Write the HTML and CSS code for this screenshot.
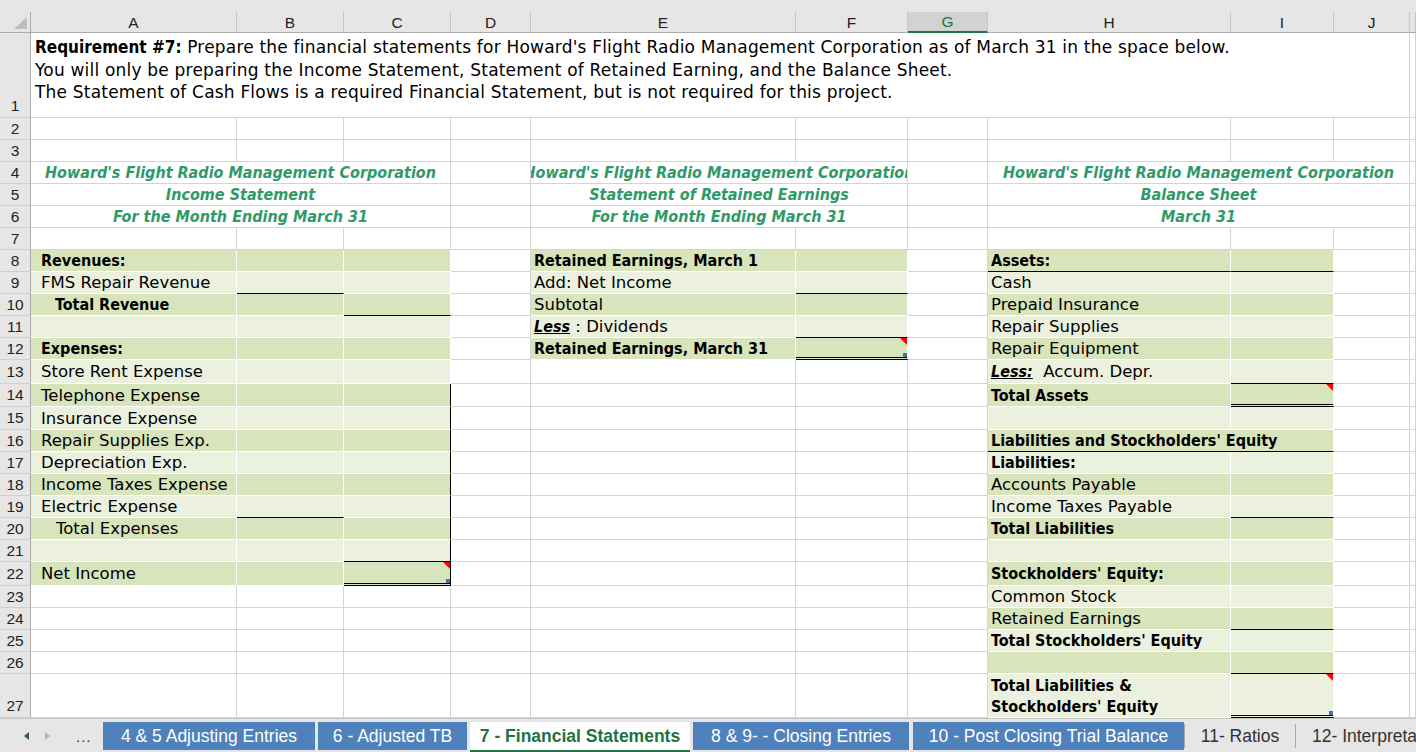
FILE: index.html
```html
<!DOCTYPE html>
<html>
<head>
<meta charset="utf-8">
<link rel="stylesheet" href="styles.css">
</head>
<body>
<div class="app">
  <div class="strip"></div>
  <div class="row colhead">
    <div class="corner"><span class="corner-tri"></span></div>
    <div class="ch">A</div><div class="ch">B</div><div class="ch">C</div><div class="ch">D</div><div class="ch">E</div><div class="ch">F</div><div class="ch sel">G</div><div class="ch">H</div><div class="ch">I</div><div class="ch">J</div><div class="ch"></div>
  </div>

  <div class="row h85">
    <div class="rh rh-b">1</div>
    <div class="c req"><div><b>Requirement #7:</b> Prepare the financial statements for Howard's Flight Radio Management Corporation as of March 31 in the space below.<br>You will only be preparing the Income Statement, Statement of Retained Earning, and the Balance Sheet.<br>The Statement of Cash Flows is a required Financial Statement, but is not required for this project.</div></div>
    <div class="c"></div>
  </div>

  <div class="row h22"><div class="rh">2</div><div class="c"></div><div class="c"></div><div class="c"></div><div class="c"></div><div class="c"></div><div class="c"></div><div class="c"></div><div class="c"></div><div class="c"></div><div class="c"></div><div class="c"></div></div>
  <div class="row h22"><div class="rh">3</div><div class="c"></div><div class="c"></div><div class="c"></div><div class="c"></div><div class="c"></div><div class="c"></div><div class="c"></div><div class="c"></div><div class="c"></div><div class="c"></div><div class="c"></div></div>

  <div class="row h22"><div class="rh">4</div><div class="c ttl span-ac"><span>Howard's Flight Radio Management Corporation</span></div><div class="c"></div><div class="c ttl span-ef"><span>Howard's Flight Radio Management Corporation</span></div><div class="c"></div><div class="c ttl span-hj"><span>Howard's Flight Radio Management Corporation</span></div><div class="c"></div></div>
  <div class="row h22"><div class="rh">5</div><div class="c ttl span-ac"><span>Income Statement</span></div><div class="c"></div><div class="c ttl span-ef"><span>Statement of Retained Earnings</span></div><div class="c"></div><div class="c ttl span-hj"><span>Balance Sheet</span></div><div class="c"></div></div>
  <div class="row h22"><div class="rh">6</div><div class="c ttl span-ac"><span>For the Month Ending March 31</span></div><div class="c"></div><div class="c ttl span-ef"><span>For the Month Ending March 31</span></div><div class="c"></div><div class="c ttl span-hj"><span>March 31</span></div><div class="c"></div></div>

  <div class="row h22"><div class="rh">7</div><div class="c"></div><div class="c"></div><div class="c"></div><div class="c"></div><div class="c"></div><div class="c"></div><div class="c"></div><div class="c"></div><div class="c"></div><div class="c"></div><div class="c"></div></div>

  <div class="row h22"><div class="rh">8</div>
    <div class="c dk pa b">Revenues:</div><div class="c dk"></div><div class="c dk"></div><div class="c"></div>
    <div class="c dk b">Retained Earnings, March 1</div><div class="c dk"></div><div class="c"></div>
    <div class="c dk b bb">Assets:</div><div class="c dk bb"></div><div class="c"></div><div class="c"></div></div>
  <div class="row h22"><div class="rh">9</div>
    <div class="c lt pa">FMS Repair Revenue</div><div class="c lt bb"></div><div class="c lt"></div><div class="c"></div>
    <div class="c lt">Add: Net Income</div><div class="c lt bb"></div><div class="c"></div>
    <div class="c lt">Cash</div><div class="c lt"></div><div class="c"></div><div class="c"></div></div>
  <div class="row h22"><div class="rh">10</div>
    <div class="c dk pa2 b">Total Revenue</div><div class="c dk"></div><div class="c dk bb"></div><div class="c"></div>
    <div class="c dk">Subtotal</div><div class="c dk"></div><div class="c"></div>
    <div class="c dk">Prepaid Insurance</div><div class="c dk"></div><div class="c"></div><div class="c"></div></div>
  <div class="row h22"><div class="rh">11</div>
    <div class="c lt"></div><div class="c lt"></div><div class="c lt"></div><div class="c"></div>
    <div class="c lt"><span class="less">Less</span>&nbsp;: Dividends</div><div class="c lt bb"></div><div class="c"></div>
    <div class="c lt">Repair Supplies</div><div class="c lt"></div><div class="c"></div><div class="c"></div></div>
  <div class="row h22"><div class="rh">12</div>
    <div class="c dk pa b">Expenses:</div><div class="c dk"></div><div class="c dk"></div><div class="c"></div>
    <div class="c dk b">Retained Earnings, March 31</div><div class="c dk bbd note handle"></div><div class="c"></div>
    <div class="c dk">Repair Equipment</div><div class="c dk"></div><div class="c"></div><div class="c"></div></div>
  <div class="row h24"><div class="rh">13</div>
    <div class="c lt pa">Store Rent Expense</div><div class="c lt"></div><div class="c lt"></div><div class="c"></div>
    <div class="c"></div><div class="c"></div><div class="c"></div>
    <div class="c lt"><span class="less">Less:</span>&nbsp; Accum. Depr.</div><div class="c lt bb"></div><div class="c"></div><div class="c"></div></div>
  <div class="row h23"><div class="rh">14</div>
    <div class="c dk pa">Telephone Expense</div><div class="c dk"></div><div class="c dk br"></div><div class="c"></div>
    <div class="c"></div><div class="c"></div><div class="c"></div>
    <div class="c dk b">Total Assets</div><div class="c dk bbd note"></div><div class="c"></div><div class="c"></div></div>
  <div class="row h23"><div class="rh">15</div>
    <div class="c lt pa">Insurance Expense</div><div class="c lt"></div><div class="c lt br"></div><div class="c"></div>
    <div class="c"></div><div class="c"></div><div class="c"></div>
    <div class="c lt"></div><div class="c lt"></div><div class="c"></div><div class="c"></div></div>
  <div class="row h22"><div class="rh">16</div>
    <div class="c dk pa">Repair Supplies Exp.</div><div class="c dk"></div><div class="c dk br"></div><div class="c"></div>
    <div class="c"></div><div class="c"></div><div class="c"></div>
    <div class="c dk b bb span-hi">Liabilities and Stockholders' Equity</div><div class="c"></div><div class="c"></div></div>
  <div class="row h22"><div class="rh">17</div>
    <div class="c lt pa">Depreciation Exp.</div><div class="c lt"></div><div class="c lt br"></div><div class="c"></div>
    <div class="c"></div><div class="c"></div><div class="c"></div>
    <div class="c lt b">Liabilities:</div><div class="c lt"></div><div class="c"></div><div class="c"></div></div>
  <div class="row h22"><div class="rh">18</div>
    <div class="c dk pa">Income Taxes Expense</div><div class="c dk"></div><div class="c dk br"></div><div class="c"></div>
    <div class="c"></div><div class="c"></div><div class="c"></div>
    <div class="c dk">Accounts Payable</div><div class="c dk"></div><div class="c"></div><div class="c"></div></div>
  <div class="row h22"><div class="rh">19</div>
    <div class="c lt pa">Electric Expense</div><div class="c lt bb"></div><div class="c lt br"></div><div class="c"></div>
    <div class="c"></div><div class="c"></div><div class="c"></div>
    <div class="c lt">Income Taxes Payable</div><div class="c lt bb"></div><div class="c"></div><div class="c"></div></div>
  <div class="row h22"><div class="rh">20</div>
    <div class="c dk pa3">Total Expenses</div><div class="c dk"></div><div class="c dk br"></div><div class="c"></div>
    <div class="c"></div><div class="c"></div><div class="c"></div>
    <div class="c dk b">Total Liabilities</div><div class="c dk"></div><div class="c"></div><div class="c"></div></div>
  <div class="row h22"><div class="rh">21</div>
    <div class="c lt"></div><div class="c lt"></div><div class="c lt br bb"></div><div class="c"></div>
    <div class="c"></div><div class="c"></div><div class="c"></div>
    <div class="c lt"></div><div class="c lt"></div><div class="c"></div><div class="c"></div></div>
  <div class="row h24"><div class="rh">22</div>
    <div class="c dk pa">Net Income</div><div class="c dk"></div><div class="c dk br bbd note handle"></div><div class="c"></div>
    <div class="c"></div><div class="c"></div><div class="c"></div>
    <div class="c dk b">Stockholders' Equity:</div><div class="c dk"></div><div class="c"></div><div class="c"></div></div>
  <div class="row h22"><div class="rh">23</div>
    <div class="c"></div><div class="c"></div><div class="c"></div><div class="c"></div>
    <div class="c"></div><div class="c"></div><div class="c"></div>
    <div class="c lt">Common Stock</div><div class="c lt"></div><div class="c"></div><div class="c"></div></div>
  <div class="row h22"><div class="rh">24</div>
    <div class="c"></div><div class="c"></div><div class="c"></div><div class="c"></div>
    <div class="c"></div><div class="c"></div><div class="c"></div>
    <div class="c dk">Retained Earnings</div><div class="c dk bb"></div><div class="c"></div><div class="c"></div></div>
  <div class="row h22"><div class="rh">25</div>
    <div class="c"></div><div class="c"></div><div class="c"></div><div class="c"></div>
    <div class="c"></div><div class="c"></div><div class="c"></div>
    <div class="c lt b">Total Stockholders' Equity</div><div class="c lt"></div><div class="c"></div><div class="c"></div></div>
  <div class="row h22"><div class="rh">26</div>
    <div class="c"></div><div class="c"></div><div class="c"></div><div class="c"></div>
    <div class="c"></div><div class="c"></div><div class="c"></div>
    <div class="c dk"></div><div class="c dk bb"></div><div class="c"></div><div class="c"></div></div>
  <div class="row h44"><div class="rh rh-b">27</div>
    <div class="c"></div><div class="c"></div><div class="c"></div><div class="c"></div>
    <div class="c"></div><div class="c"></div><div class="c"></div>
    <div class="c lt b two">Total Liabilities &amp;<br>Stockholders' Equity</div><div class="c lt bbd note handle"></div><div class="c"></div><div class="c"></div></div>

  <div class="tabs">
    <div class="nav">
      <svg width="10" height="12" viewBox="0 0 10 12" class="nav-l"><path d="M7 2 L2 6 L7 10 Z" fill="#2f5f44"/></svg>
      <svg width="10" height="12" viewBox="0 0 10 12" class="nav-r"><path d="M3 2 L8 6 L3 10 Z" fill="#b5b5b5"/></svg>
      <span class="dots">...</span>
    </div>
    <div class="tab blue t1">4 &amp; 5 Adjusting Entries</div>
    <div class="tab blue t2">6 - Adjusted TB</div>
    <div class="tab active t3">7 - Financial Statements</div>
    <div class="tab blue t4">8 &amp; 9- - Closing Entries</div>
    <div class="tab blue t5">10 - Post Closing Trial Balance</div>
    <div class="tab plain t6">11- Ratios</div>
    <div class="tab plain t7">12- Interpreta</div>
  </div>
</div>
</body>
</html>
```

FILE: styles.css
```css
* { box-sizing: border-box; }
html, body { margin: 0; padding: 0; }
body {
  width: 1416px;
  height: 752px;
  overflow: hidden;
  background: #ffffff;
  font-family: "DejaVu Sans", "Liberation Sans", sans-serif;
  color: #000;
}
.app { width: 1416px; height: 752px; overflow: hidden; }

.strip { height: 12px; background: #e6e6e6; }

.row {
  display: grid;
  grid-template-columns: 31px 206px 107px 107px 80px 265px 112px 80px 243px 103px 76px 1fr;
}
.h22 { height: 22px; }
.h23 { height: 23px; }
.h24 { height: 24px; }
.h44 { height: 44px; }
.h85 { height: 85px; }

.colhead { height: 21px; background: #e6e6e6; }
.corner {
  position: relative;
  border-right: 1px solid #ababab;
  border-bottom: 1px solid #ababab;
}
.corner-tri {
  position: absolute;
  right: 3px;
  bottom: 3px;
  width: 0;
  height: 0;
  border-left: 13px solid transparent;
  border-bottom: 12px solid #bdbdbd;
}
.ch {
  border-right: 1px solid #c4c4c4;
  border-bottom: 1px solid #ababab;
  font-family: "Liberation Sans", sans-serif;
  font-size: 15.5px;
  color: #222;
  display: flex;
  align-items: center;
  justify-content: center;
  padding-top: 1px;
}
.ch.sel {
  background: #d2d2d2;
  color: #217346;
  border-bottom: 2px solid #217346;
}

.rh {
  background: #e6e6e6;
  border-right: 1px solid #ababab;
  border-bottom: 1px solid #d0d0d0;
  font-family: "Liberation Sans", sans-serif;
  font-size: 15.5px;
  color: #222;
  display: flex;
  align-items: center;
  justify-content: center;
}
.rh-b { align-items: flex-end; padding-bottom: 2px; }

.c {
  border-right: 1px solid #d4d4d4;
  border-bottom: 1px solid #d4d4d4;
  white-space: nowrap;
  display: flex;
  align-items: center;
  padding-left: 3px;
  font-size: 16.5px;
  min-width: 0;
}

.req {
  grid-column: 2 / 12;
  align-items: flex-start;
  padding: 3px 0 0 4px;
  font-size: 17px;
  letter-spacing: 0.2px;
  line-height: 22.5px;
}
.req b {
  font-family: "DejaVu Sans Condensed", "DejaVu Sans", sans-serif;
  letter-spacing: 0;
}
.span-ac { grid-column: 2 / 5; }
.span-ef { grid-column: 6 / 8; }
.span-hj { grid-column: 9 / 12; }
.span-hi { grid-column: 9 / 11; }

.ttl {
  justify-content: center;
  overflow: hidden;
  padding-left: 0;
  color: #2f9a69;
  font-family: "DejaVu Sans Condensed", "DejaVu Sans", sans-serif;
  font-weight: bold;
  font-style: italic;
  font-size: 16px;
}
.ttl span { flex: none; }

.dk { background: #d8e4bc; border-right-color: #ffffff; border-bottom-color: #ffffff; }
.lt { background: #ebf1de; border-right-color: #ffffff; border-bottom-color: #ffffff; }

.pa { padding-left: 10px; }
.pa2 { padding-left: 24px; }
.pa3 { padding-left: 25px; }
.b {
  font-family: "DejaVu Sans Condensed", "DejaVu Sans", sans-serif;
  font-weight: bold;
  font-size: 16px;
}
.less {
  font-family: "DejaVu Sans Condensed", "DejaVu Sans", sans-serif;
  font-weight: bold;
  font-style: italic;
  text-decoration: underline;
  font-size: 16px;
}
.two { line-height: 21px; white-space: nowrap; }

.bb { border-bottom: 1px solid #000; }
.bbd { border-bottom: 3px double #000; }
.br { border-right: 1px solid #000; }

.note { position: relative; }
.note::after {
  content: "";
  position: absolute;
  top: 0;
  right: 0;
  width: 0;
  height: 0;
  border-left: 7px solid transparent;
  border-top: 7px solid #ff0000;
}
.handle::before {
  content: "";
  position: absolute;
  right: 0;
  bottom: 0;
  width: 4px;
  height: 4px;
  background: #4472c4;
}

.tabs {
  height: 34px;
  background: #e6e6e6;
  border-top: 1px solid #c6c6c6;
  display: flex;
  align-items: flex-start;
  padding-top: 3px;
  font-family: "Liberation Sans", sans-serif;
  font-size: 17.5px;
  white-space: nowrap;
}
.nav {
  width: 103px;
  flex: none;
  display: flex;
  align-items: center;
  height: 28px;
  padding-left: 22px;
}
.nav-r { margin-left: 10px; }
.dots { margin-left: 24px; color: #333; font-size: 15px; letter-spacing: 1px; }

.tab {
  flex: none;
  height: 28px;
  display: flex;
  align-items: center;
  justify-content: center;
  margin-right: 3px;
}
.tab.blue { background: #4f81bd; color: #ffffff; }
.tab.active {
  background: #ffffff;
  color: #217346;
  font-weight: bold;
  border-bottom: 2px solid #217346;
  height: 30px;
}
.tab.plain {
  color: #333;
  margin-right: 0;
  border-right: 1px solid #a8a8a8;
  height: 24px;
  margin-top: 2px;
}
.t1 { width: 212px; }
.t2 { width: 149px; }
.t3 { width: 220px; }
.t4 { width: 216px; margin-right: 4px; }
.t5 { width: 271px; margin-right: 0; }
.t6 { width: 112px; border-left: 1px solid #a8a8a8; }
.t7 { width: 160px; justify-content: flex-start; padding-left: 16px; border-right: none; }
```
